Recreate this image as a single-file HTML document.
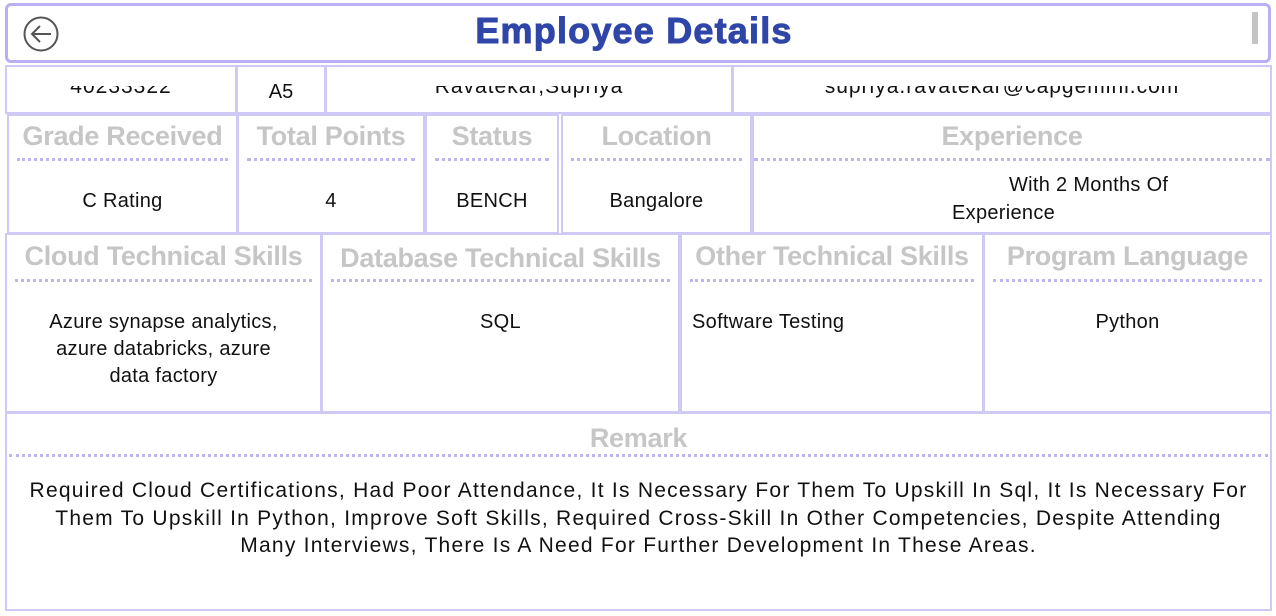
<!DOCTYPE html>
<html><head><meta charset="utf-8">
<style>
*{margin:0;padding:0;box-sizing:border-box}
body{width:1276px;height:616px;background:#fff;position:relative;overflow:hidden;font-family:"Liberation Sans",sans-serif;color:#111}
.b{position:absolute;border:2px solid #cfcaf5;background:#fff}
.h{position:absolute;left:0;right:0;text-align:center;color:#c6c6c6;font-weight:bold;font-size:27px;white-space:nowrap;letter-spacing:-0.3px}
.d{position:absolute;left:8px;right:8px;border-top:3px dotted #bdb6f0}
.v{position:absolute;left:0;right:0;text-align:center;font-size:20px;line-height:27px;letter-spacing:0.3px}
.clip{position:absolute;left:0;right:0;top:19px;bottom:0;overflow:hidden}
.clip div{position:absolute;left:0;right:0;top:-11px;text-align:center;font-size:21px;letter-spacing:1px}
</style></head><body>
<div class="b" style="left:5px;top:3px;width:1266px;height:60px;border:3px solid #b8b0f2;border-radius:6px"></div>
<svg style="position:absolute;left:22px;top:15px" width="38" height="38" viewBox="0 0 38 38"><circle cx="19" cy="19" r="16.5" fill="none" stroke="#555" stroke-width="2"/><path d="M29 19H10M18 11l-8 8 8 8" fill="none" stroke="#555" stroke-width="2"/></svg>
<div style="position:absolute;left:0;width:1268px;top:10px;text-align:center;font-weight:900;font-size:36px;color:#2f46a8;letter-spacing:1.2px;-webkit-text-stroke:1px #2f46a8">Employee Details</div>
<div style="position:absolute;left:1252px;top:12px;width:6px;height:32px;background:#c4c4c4"></div>

<div class="b" style="left:5px;top:65px;width:232px;height:49px"><div class="clip"><div>40233322</div></div></div>
<div class="b" style="left:236px;top:65px;width:90px;height:49px"><div style="position:absolute;left:0;right:0;top:14px;text-align:center;font-size:20px">A5</div></div>
<div class="b" style="left:325px;top:65px;width:408px;height:49px"><div class="clip"><div>Ravatekar,Supriya</div></div></div>
<div class="b" style="left:732px;top:65px;width:540px;height:49px"><div class="clip"><div>supriya.ravatekar@capgemini.com</div></div></div>

<div class="b" style="left:7px;top:114px;width:231px;height:120px"><div class="h" style="top:5px">Grade Received</div><div class="d" style="top:42px"></div><div class="v" style="top:72px">C Rating</div></div>
<div class="b" style="left:237px;top:114px;width:188px;height:120px"><div class="h" style="top:5px">Total Points</div><div class="d" style="top:42px"></div><div class="v" style="top:72px">4</div></div>
<div class="b" style="left:425px;top:114px;width:134px;height:120px"><div class="h" style="top:5px">Status</div><div class="d" style="top:42px"></div><div class="v" style="top:72px">BENCH</div></div>
<div class="b" style="left:561px;top:114px;width:191px;height:120px"><div class="h" style="top:5px">Location</div><div class="d" style="top:42px"></div><div class="v" style="top:72px">Bangalore</div></div>
<div class="b" style="left:752px;top:114px;width:520px;height:120px"><div class="h" style="top:5px">Experience</div><div class="d" style="top:42px;left:0;right:0"></div><div class="v" style="top:56px;padding-left:255px;text-align:left">With 2 Months Of</div><div class="v" style="top:84px;padding-left:198px;text-align:left">Experience</div></div>

<div class="b" style="left:5px;top:233px;width:317px;height:180px"><div class="h" style="top:6px">Cloud Technical Skills</div><div class="d" style="top:44px"></div><div class="v" style="top:74px">Azure synapse analytics,<br>azure databricks, azure<br>data factory</div></div>
<div class="b" style="left:321px;top:233px;width:359px;height:180px"><div class="h" style="top:8px">Database Technical Skills</div><div class="d" style="top:44px"></div><div class="v" style="top:74px">SQL</div></div>
<div class="b" style="left:680px;top:233px;width:304px;height:180px"><div class="h" style="top:6px">Other Technical Skills</div><div class="d" style="top:44px"></div><div class="v" style="top:74px;text-align:left;left:10px">Software Testing</div></div>
<div class="b" style="left:983px;top:233px;width:289px;height:180px"><div class="h" style="top:6px">Program Language</div><div class="d" style="top:44px"></div><div class="v" style="top:74px">Python</div></div>

<div class="b" style="left:5px;top:412px;width:1267px;height:199px"><div class="h" style="top:9px">Remark</div><div class="d" style="top:40px;left:2px;right:2px"></div><div class="v" style="top:63px;left:0;right:0;font-size:21px;line-height:27.5px;letter-spacing:1.25px;white-space:nowrap">Required Cloud Certifications, Had Poor Attendance, It Is Necessary For Them To Upskill In Sql, It Is Necessary For<br>Them To Upskill In Python, Improve Soft Skills, Required Cross-Skill In Other Competencies, Despite Attending<br>Many Interviews, There Is A Need For Further Development In These Areas.</div></div>
</body></html>
